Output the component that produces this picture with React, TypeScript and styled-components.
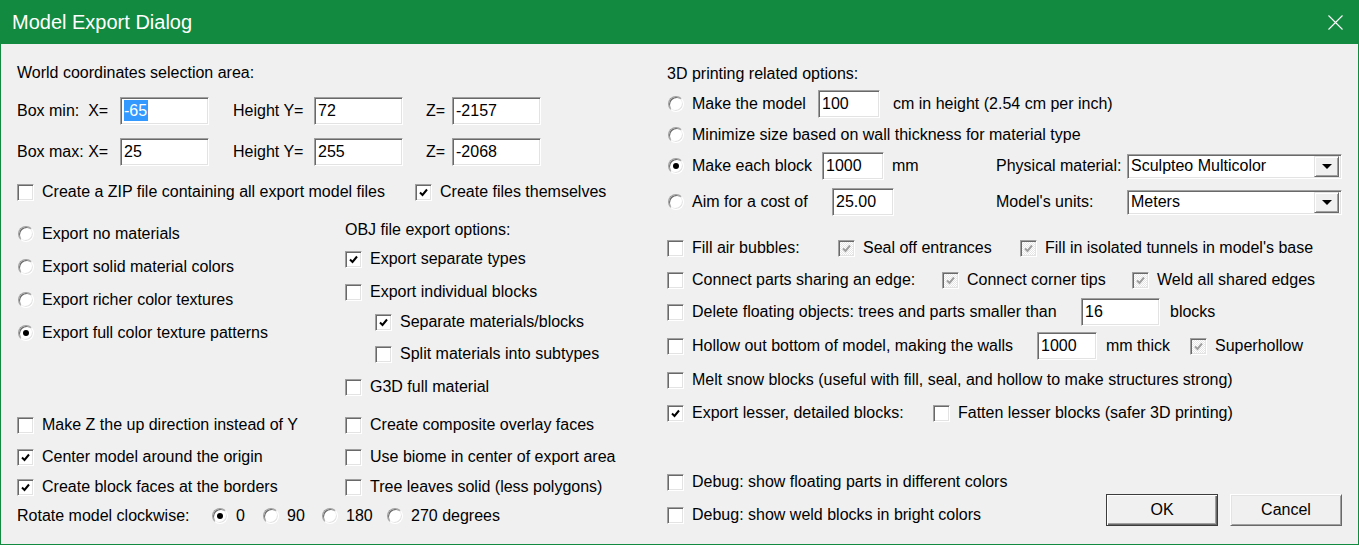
import React from 'react';
import styled, { createGlobalStyle, css } from 'styled-components';

const GREEN = '#128a40';

const Global = createGlobalStyle`
  html, body {
    margin: 0;
    padding: 0;
    background: #f0f0f0;
  }
  body {
    font-family: "Liberation Sans", Arial, sans-serif;
    font-size: 16px;
    color: #000;
  }
`;

const sunken = css`
  box-sizing: border-box;
  border: 1px solid;
  border-color: #a0a0a0 #fff #fff #a0a0a0;
  box-shadow: inset 1px 1px 0 #696969, inset -1px -1px 0 #e3e3e3;
`;

const Window = styled.div`
  width: 1359px;
  height: 545px;
  box-sizing: border-box;
  border: 1px solid ${GREEN};
  border-top: none;
  background: #f0f0f0;
  display: flex;
  flex-direction: column;
  overflow: hidden;
`;

const TitleBar = styled.div`
  height: 44px;
  flex: none;
  background: ${GREEN};
  color: #fff;
  font-size: 20px;
  display: flex;
  align-items: center;
  justify-content: space-between;
  padding: 0 16px 0 12px;
  margin: 0 -1px;
`;

const Body = styled.div`
  display: flex;
  padding-left: 16px;
`;

const Column = styled.div<{ $w?: number }>`
  display: flex;
  flex-direction: column;
  flex: none;
  width: ${(p) => (p.$w ? `${p.$w}px` : 'auto')};
`;

const Section = styled.div`
  display: flex;
  align-items: flex-start;
`;

const Row = styled.div<{ $mt?: number }>`
  display: flex;
  align-items: center;
  height: 28px;
  margin-top: ${(p) => p.$mt ?? 0}px;
  white-space: pre;
`;

const Text = styled.span<{ $w?: number; $ml?: number }>`
  flex: none;
  width: ${(p) => (p.$w ? `${p.$w}px` : 'auto')};
  margin-left: ${(p) => p.$ml ?? 0}px;
`;

const Option = styled.label<{ $w?: number; $ml?: number }>`
  display: flex;
  align-items: center;
  flex: none;
  width: ${(p) => (p.$w ? `${p.$w}px` : 'auto')};
  margin-left: ${(p) => p.$ml ?? 0}px;
`;

const Box = styled.span<{ $disabled?: boolean }>`
  ${sunken};
  width: 17px;
  height: 17px;
  flex: none;
  margin-right: 8px;
  display: flex;
  align-items: center;
  justify-content: center;
  background: #fff;
  ${(p) =>
    p.$disabled &&
    css`
      background: repeating-conic-gradient(#fff 0 25%, #e6e6e6 0 50%) 0 0 / 2px 2px;
    `}
`;

const Circle = styled.span<{ $on?: boolean }>`
  ${sunken};
  width: 16px;
  height: 16px;
  border-radius: 50%;
  flex: none;
  margin: 0 8px 0 1px;
  background: #fff;
  display: flex;
  align-items: center;
  justify-content: center;
  &::after {
    content: '';
    display: ${(p) => (p.$on ? 'block' : 'none')};
    width: 6px;
    height: 6px;
    border-radius: 50%;
    background: #000;
  }
`;

const Field = styled.div<{ $w: number; $ml?: number }>`
  ${sunken};
  width: ${(p) => p.$w}px;
  height: 28px;
  flex: none;
  margin-left: ${(p) => p.$ml ?? 0}px;
  background: #fff;
  padding: 0 0 1px 3px;
  display: flex;
  align-items: center;
`;

const Selected = styled.span`
  background: #3399ff;
  color: #fff;
  line-height: 21px;
  padding-right: 1px;
`;

const Select = styled.div`
  ${sunken};
  width: 215px;
  height: 25px;
  flex: none;
  background: #fff;
  padding: 0 2px 0 3px;
  display: flex;
  align-items: center;
  justify-content: space-between;
`;

const DropButton = styled.span`
  box-sizing: border-box;
  width: 25px;
  height: 21px;
  background: #f0f0f0;
  border: 1px solid;
  border-color: #e3e3e3 #696969 #696969 #e3e3e3;
  box-shadow: inset 1px 1px 0 #fff, inset -1px -1px 0 #a0a0a0;
  display: flex;
  align-items: center;
  justify-content: center;
  &::after {
    content: '';
    border-left: 5px solid transparent;
    border-right: 5px solid transparent;
    border-top: 5px solid #000;
  }
`;

const Footer = styled.div`
  display: flex;
  justify-content: space-between;
  align-items: flex-start;
`;

const Buttons = styled.div`
  display: flex;
  gap: 12px;
  margin-top: 67px;
`;

const Button = styled.button<{ $default?: boolean }>`
  width: 112px;
  height: 32px;
  font: inherit;
  color: #000;
  background: #f0f0f0;
  border: 1px solid;
  border-color: #fff #696969 #696969 #fff;
  box-shadow: inset 1px 1px 0 #e3e3e3, inset -1px -1px 0 #a0a0a0;
  padding: 0;
  ${(p) =>
    p.$default &&
    css`
      border-color: #3c3c3c;
      box-shadow: inset 1px 1px 0 #fff, inset -1px -1px 0 #696969, inset -2px -2px 0 #a0a0a0;
    `}
`;

const Check = ({ on, disabled }: { on?: boolean; disabled?: boolean }) => (
  <Box $disabled={disabled}>
    {on && (
      <svg width="13" height="13" viewBox="0 0 13 13">
        <polyline
          points="3,6.5 5.5,9 10,3.5"
          fill="none"
          stroke={disabled ? '#a0a0a0' : '#000'}
          strokeWidth="2"
        />
      </svg>
    )}
  </Box>
);

type OptProps = { label: string; on?: boolean; disabled?: boolean; w?: number; ml?: number };

const CheckOption = ({ label, on, disabled, w, ml }: OptProps) => (
  <Option $w={w} $ml={ml}>
    <Check on={on} disabled={disabled} />
    {label}
  </Option>
);

const RadioOption = ({ label, on, w, ml }: OptProps) => (
  <Option $w={w} $ml={ml}>
    <Circle $on={on} />
    {label}
  </Option>
);

const CloseIcon = () => (
  <svg width="15" height="15" viewBox="0 0 15 15">
    <path d="M0.5 0.5 L14.5 14.5 M14.5 0.5 L0.5 14.5" stroke="#fff" strokeWidth="1.1" />
  </svg>
);

export default function App() {
  return (
    <>
      <Global />
      <Window>
        <TitleBar>
          <span>Model Export Dialog</span>
          <CloseIcon />
        </TitleBar>
        <Body>
          <Column $w={650}>
            <Row $mt={15}>
              <Text>World coordinates selection area:</Text>
            </Row>
            <Row $mt={10}>
              <Text $w={103}>Box min:  X=</Text>
              <Field $w={89}>
                <Selected>-65</Selected>
              </Field>
              <Text $ml={24} $w={81}>Height Y=</Text>
              <Field $w={89}>72</Field>
              <Text $ml={23} $w={26}>Z=</Text>
              <Field $w={89}>-2157</Field>
            </Row>
            <Row $mt={13}>
              <Text $w={103}>Box max: X=</Text>
              <Field $w={89}>25</Field>
              <Text $ml={24} $w={81}>Height Y=</Text>
              <Field $w={89}>255</Field>
              <Text $ml={23} $w={26}>Z=</Text>
              <Field $w={89}>-2068</Field>
            </Row>
            <Row $mt={12}>
              <CheckOption w={398} label="Create a ZIP file containing all export model files" />
              <CheckOption on label="Create files themselves" />
            </Row>
            <Section>
              <Column $w={328}>
                <Row $mt={14}>
                  <RadioOption label="Export no materials" />
                </Row>
                <Row $mt={5}>
                  <RadioOption label="Export solid material colors" />
                </Row>
                <Row $mt={5}>
                  <RadioOption label="Export richer color textures" />
                </Row>
                <Row $mt={5}>
                  <RadioOption on label="Export full color texture patterns" />
                </Row>
              </Column>
              <Column>
                <Row $mt={10}>
                  <Text>OBJ file export options:</Text>
                </Row>
                <Row $mt={1}>
                  <CheckOption on label="Export separate types" />
                </Row>
                <Row $mt={5}>
                  <CheckOption label="Export individual blocks" />
                </Row>
                <Row $mt={2}>
                  <CheckOption ml={30} on label="Separate materials/blocks" />
                </Row>
                <Row $mt={4}>
                  <CheckOption ml={30} label="Split materials into subtypes" />
                </Row>
                <Row $mt={5}>
                  <CheckOption label="G3D full material" />
                </Row>
              </Column>
            </Section>
            <Section>
              <Column $w={328}>
                <Row $mt={10}>
                  <CheckOption label="Make Z the up direction instead of Y" />
                </Row>
                <Row $mt={4}>
                  <CheckOption on label="Center model around the origin" />
                </Row>
                <Row $mt={2}>
                  <CheckOption on label="Create block faces at the borders" />
                </Row>
              </Column>
              <Column>
                <Row $mt={10}>
                  <CheckOption label="Create composite overlay faces" />
                </Row>
                <Row $mt={4}>
                  <CheckOption label="Use biome in center of export area" />
                </Row>
                <Row $mt={2}>
                  <CheckOption label="Tree leaves solid (less polygons)" />
                </Row>
              </Column>
            </Section>
            <Row $mt={1}>
              <Text $w={194}>Rotate model clockwise:</Text>
              <RadioOption w={51} on label="0" />
              <RadioOption w={59} label="90" />
              <RadioOption w={65} label="180" />
              <RadioOption label="270 degrees" />
            </Row>
          </Column>

          <Column $w={675}>
            <Row $mt={16}>
              <Text>3D printing related options:</Text>
            </Row>
            <Row $mt={2}>
              <RadioOption w={151} label="Make the model" />
              <Field $w={62}>100</Field>
              <Text $ml={13}>cm in height (2.54 cm per inch)</Text>
            </Row>
            <Row $mt={3}>
              <RadioOption label="Minimize size based on wall thickness for material type" />
            </Row>
            <Row $mt={3}>
              <RadioOption w={155} on label="Make each block" />
              <Field $w={62}>1000</Field>
              <Text $ml={8} $w={104}>mm</Text>
              <Text $w={131}>Physical material:</Text>
              <Select>
                Sculpteo Multicolor
                <DropButton />
              </Select>
            </Row>
            <Row $mt={8}>
              <RadioOption w={165} label="Aim for a cost of" />
              <Field $w={62}>25.00</Field>
              <Text $ml={102} $w={131}>Model's units:</Text>
              <Select>
                Meters
                <DropButton />
              </Select>
            </Row>
            <Row $mt={18}>
              <CheckOption w={171} label="Fill air bubbles:" />
              <CheckOption w={182} on disabled label="Seal off entrances" />
              <CheckOption on disabled label="Fill in isolated tunnels in model's base" />
            </Row>
            <Row $mt={4}>
              <CheckOption w={275} label="Connect parts sharing an edge:" />
              <CheckOption w={190} on disabled label="Connect corner tips" />
              <CheckOption on disabled label="Weld all shared edges" />
            </Row>
            <Row $mt={4}>
              <CheckOption w={414} label="Delete floating objects: trees and parts smaller than" />
              <Field $w={79}>16</Field>
              <Text $ml={10}>blocks</Text>
            </Row>
            <Row $mt={6}>
              <CheckOption w={370} label="Hollow out bottom of model, making the walls" />
              <Field $w={60}>1000</Field>
              <Text $ml={9} $w={84}>mm thick</Text>
              <CheckOption on disabled label="Superhollow" />
            </Row>
            <Row $mt={6}>
              <CheckOption label="Melt snow blocks (useful with fill, seal, and hollow to make structures strong)" />
            </Row>
            <Row $mt={5}>
              <CheckOption w={266} on label="Export lesser, detailed blocks:" />
              <CheckOption label="Fatten lesser blocks (safer 3D printing)" />
            </Row>
            <Footer>
              <Column>
                <Row $mt={41}>
                  <CheckOption label="Debug: show floating parts in different colors" />
                </Row>
                <Row $mt={5}>
                  <CheckOption label="Debug: show weld blocks in bright colors" />
                </Row>
              </Column>
              <Buttons>
                <Button $default>OK</Button>
                <Button>Cancel</Button>
              </Buttons>
            </Footer>
          </Column>
        </Body>
      </Window>
    </>
  );
}
